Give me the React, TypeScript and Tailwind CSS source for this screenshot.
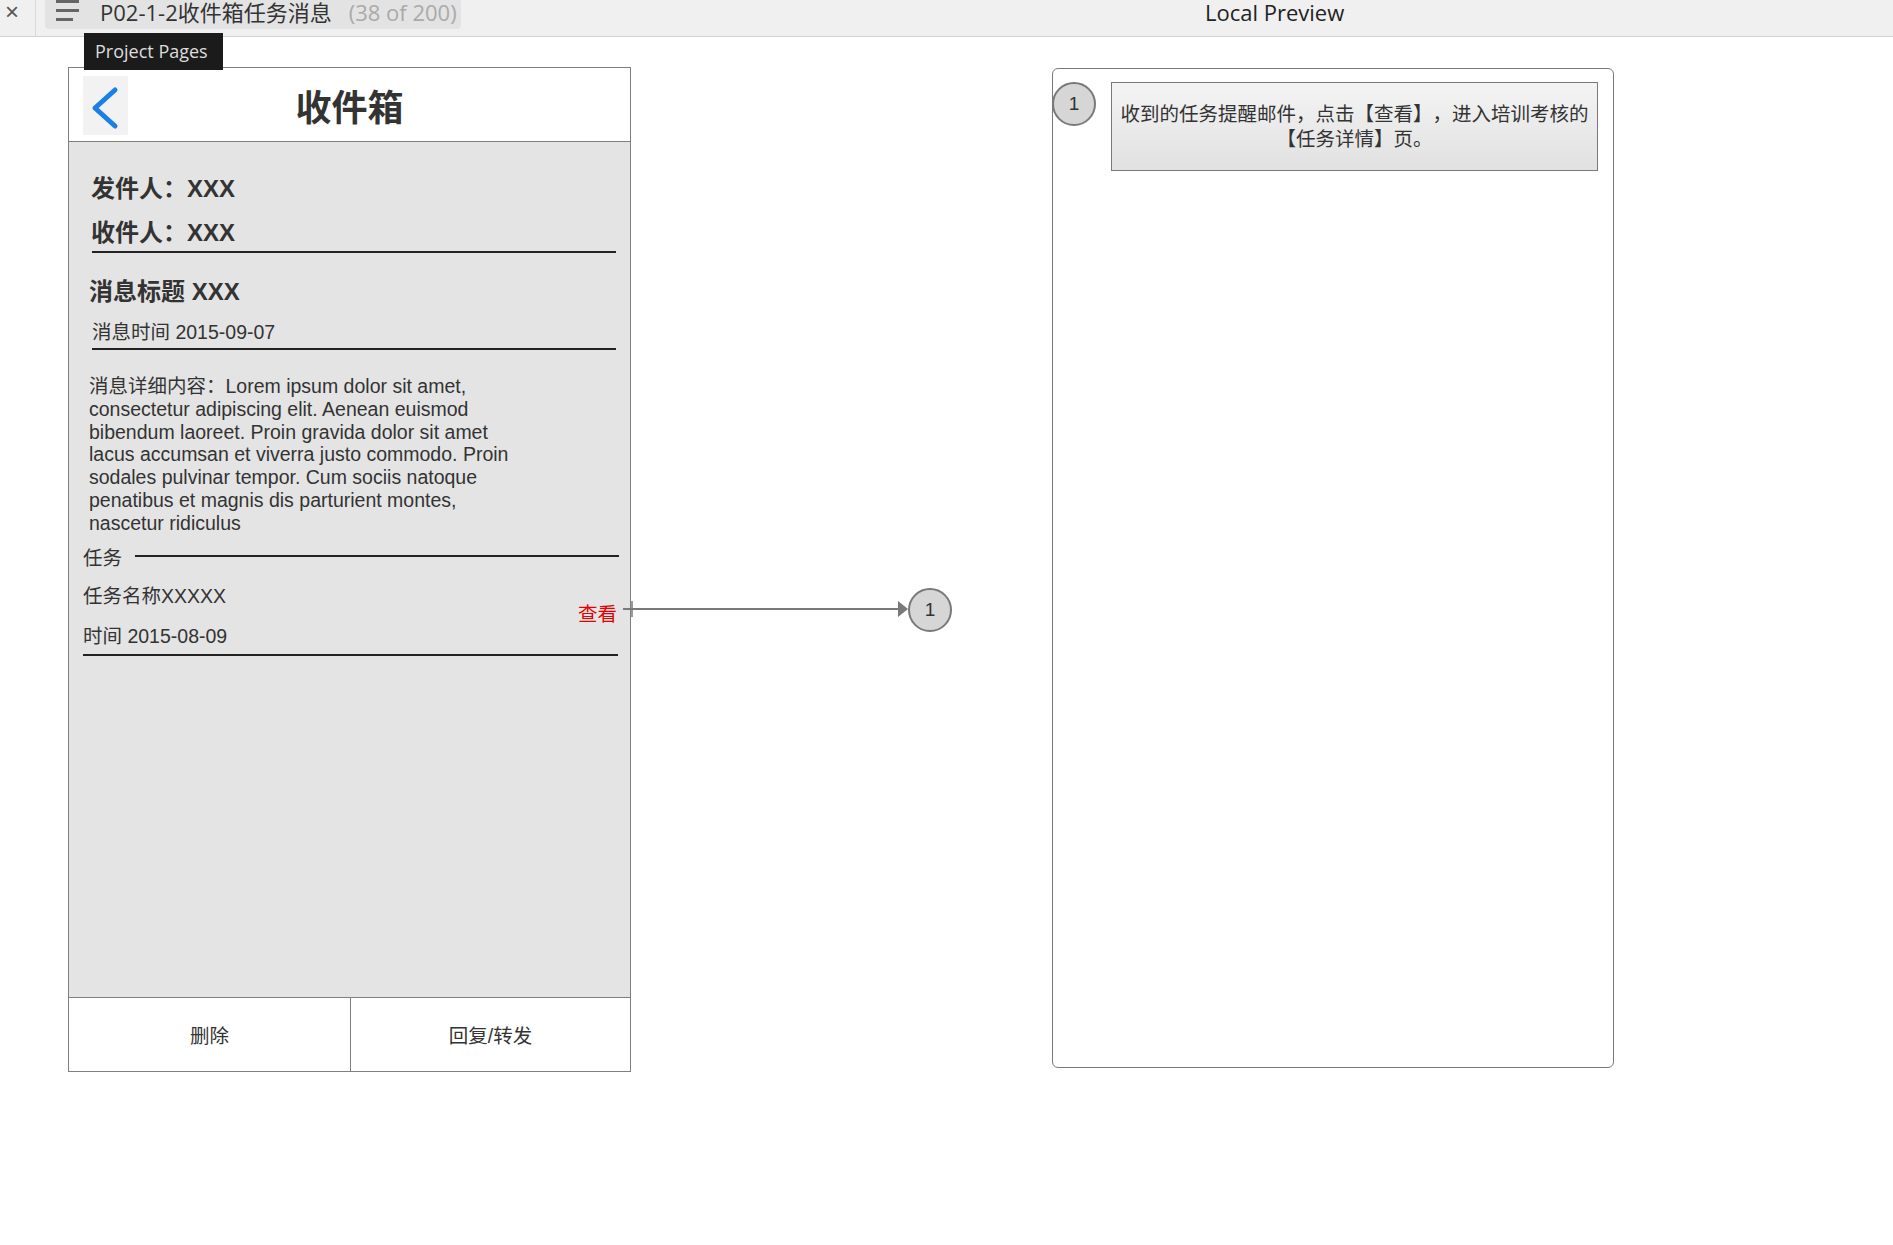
const latinCjk = "font-['Liberation_Sans','Noto_Sans_CJK_SC',sans-serif]"

function Badge({ className = '' }: { className?: string }) {
  return (
    <div
      className={`flex h-[44px] w-[44px] shrink-0 items-center justify-center rounded-full border-2 border-[#797979] bg-[#d6d6d6] font-['Liberation_Sans',sans-serif] text-[19px] text-[#333] ${className}`}
    >
      1
    </div>
  )
}

function TopBar() {
  return (
    <div className="relative flex h-[37px] items-start border-b border-[#d2d2d2] bg-[#f0f0f0] font-['Open_Sans','Noto_Sans_CJK_SC',sans-serif]">
      <div className="flex h-full w-[36px] items-start border-r border-[#dadada] pl-[5px] font-['Liberation_Sans',sans-serif] text-[24px] leading-[24px] text-[#555]">
        ×
      </div>
      <div className="ml-[9px] flex h-[29px] w-[416px] items-start rounded-b-[4px] bg-[#e3e3e3] pl-[11px]">
        <svg width="24" height="22" viewBox="0 0 24 22">
          <rect x="0" y="0" width="23" height="3" fill="#666" />
          <rect x="0" y="9" width="23" height="3" fill="#666" />
          <rect x="0" y="18" width="17" height="3" fill="#666" />
        </svg>
        <span className="ml-[20px] text-[22px] leading-[24px] text-[#333]">P02-1-2收件箱任务消息</span>
        <span className="ml-[17px] text-[22px] leading-[24px] text-[#aaa]">(38 of 200)</span>
      </div>
      <div className="ml-[744px] flex h-[24px] items-center text-[22px] leading-[24px] text-[#222]">
        Local Preview
      </div>
      {/* tooltip */}
      <div className="absolute left-[84px] top-[33px] z-20 flex h-[37px] w-[139px] items-center bg-[#1b1b1b] pl-[11px] text-[18px] text-[#ddd]">
        Project Pages
      </div>
    </div>
  )
}

function PhoneCard() {
  return (
    <div className={`flex h-[1005px] w-[563px] shrink-0 flex-col border border-[#7f7f7f] bg-white text-[#333] ${latinCjk}`}>
      <div className="grid h-[74px] grid-cols-[59px_1fr_59px] items-center border-b border-[#7f7f7f]">
        <div className="ml-[14px] mt-[1px] h-[59px] w-[45px] bg-[#f2f2f2]">
          <svg width="45" height="59" viewBox="0 0 45 59">
            <polyline
              points="32,14 12,32 32,50"
              fill="none"
              stroke="#1a7fe6"
              strokeWidth="5"
              strokeLinecap="round"
              strokeLinejoin="round"
            />
          </svg>
        </div>
        <div className="pt-[8px] text-center text-[36px] font-bold leading-[40px]">收件箱</div>
        <div />
      </div>

      <div className="flex-1 bg-[#e4e4e4]">
        <div className="ml-[22px] mt-[27px] h-[40px] text-[24px] font-bold leading-[40px]">发件人：XXX</div>
        <div className="ml-[22px] mt-[5px] h-[37px] text-[24px] font-bold leading-[37px]">收件人：XXX</div>
        <div className="ml-[23px] h-[2px] w-[524px] bg-[#222]" />

        <div className="ml-[20px] mt-[19px] h-[40px] text-[24px] font-bold leading-[40px]">消息标题 XXX</div>
        <div className="ml-[23px] mt-[5px] h-[30px] text-[19.5px] leading-[30px]">消息时间 2015-09-07</div>
        <div className="ml-[23px] mt-[1px] h-[2px] w-[524px] bg-[#222]" />

        <p className="ml-[20px] mt-[25px] w-[436px] text-[19.5px] leading-[22.8px]">
          消息详细内容：Lorem ipsum dolor sit amet, consectetur adipiscing elit. Aenean euismod bibendum
          laoreet. Proin gravida dolor sit amet lacus accumsan et viverra justo commodo. Proin sodales
          pulvinar tempor. Cum sociis natoque penatibus et magnis dis parturient montes, nascetur ridiculus
        </p>

        <div className="ml-[14px] mr-[11px] mt-[12px] flex h-[24px] items-center text-[19.5px]">
          任务
          <div className="mb-[6px] ml-[13px] h-[2px] flex-1 bg-[#222]" />
        </div>

        <div className="ml-[14px] mr-[13px] mt-[10px] flex items-center justify-between text-[19.5px]">
          <div>
            <div className="h-[30px] leading-[30px]">任务名称XXXXX</div>
            <div className="mt-[10px] h-[30px] leading-[30px]">时间 2015-08-09</div>
          </div>
          <span className="mb-[2px] text-[#e60000]">查看</span>
        </div>
        <div className="ml-[14px] mt-[3px] h-[2px] w-[535px] bg-[#222]" />
      </div>

      <div className="grid h-[74px] grid-cols-[282px_1fr] border-t border-[#7f7f7f] text-[19.5px]">
        <div className="flex items-center justify-center border-r border-[#7f7f7f] pt-[4px]">删除</div>
        <div className="flex items-center justify-center pt-[4px]">回复/转发</div>
      </div>
    </div>
  )
}

function Connector() {
  return (
    <div className="relative z-10 -ml-[8px] mt-[521px] flex items-center">
      <svg width="285" height="20" viewBox="0 0 285 20" className="mb-[3px]">
        <line x1="9" y1="2" x2="9" y2="18" stroke="#797979" strokeWidth="1.5" />
        <line x1="0" y1="10" x2="277" y2="10" stroke="#797979" strokeWidth="2" />
        <polygon points="275,2 285,10 275,18" fill="#797979" />
      </svg>
      <Badge />
    </div>
  )
}

function NotePanel() {
  return (
    <div className={`ml-[100px] mt-[1px] h-[1000px] w-[562px] shrink-0 rounded-[6px] border border-[#797979] ${latinCjk}`}>
      <div className="flex items-start pt-[13px]">
        <Badge className="-ml-px" />
        <div className="ml-[15px] flex h-[89px] w-[487px] items-center justify-center border border-[#797979] bg-gradient-to-b from-[#f4f4f4] to-[#e1e1e1] px-[6px] text-center text-[19.5px] leading-[25px] text-[#333] [text-spacing-trim:space-all]">
          收到的任务提醒邮件，点击【查看】，进入培训考核的【任务详情】页。
        </div>
      </div>
    </div>
  )
}

export default function App() {
  return (
    <div className="min-h-screen bg-white">
      <TopBar />
      <div className="flex items-start pl-[68px] pt-[30px]">
        <PhoneCard />
        <Connector />
        <NotePanel />
      </div>
    </div>
  )
}
